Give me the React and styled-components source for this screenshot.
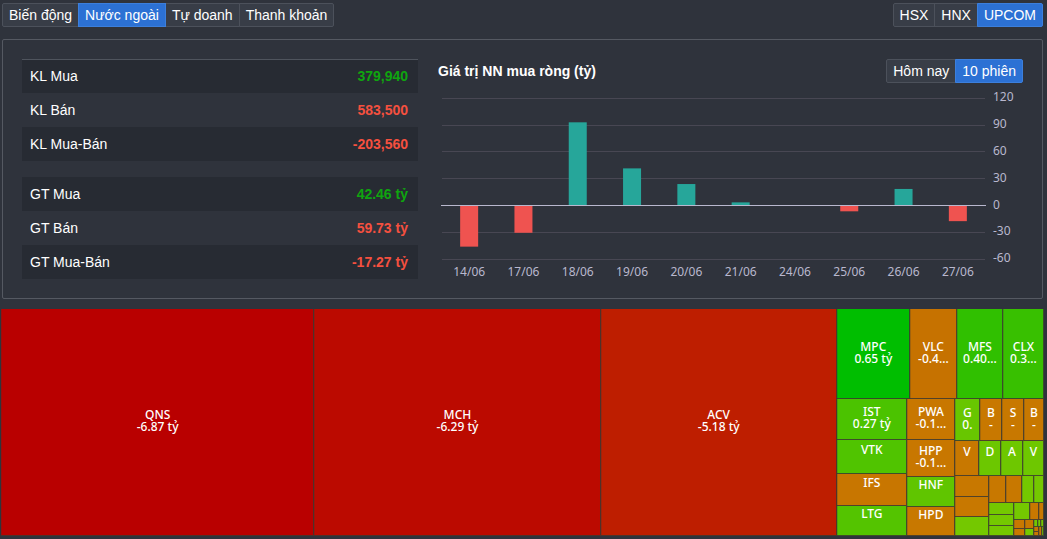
import React, { useState } from 'react';
import styled, { createGlobalStyle } from 'styled-components';

const VIEWS = ['Biến động', 'Nước ngoài', 'Tự doanh', 'Thanh khoản'];
const EXCHANGES = ['HSX', 'HNX', 'UPCOM'];
const RANGES = ['Hôm nay', '10 phiên'];

const VOLUME = [
  { label: 'KL Mua', value: '379,940', up: true },
  { label: 'KL Bán', value: '583,500' },
  { label: 'KL Mua-Bán', value: '-203,560' },
];

const VALUE = [
  { label: 'GT Mua', value: '42.46 tỷ', up: true },
  { label: 'GT Bán', value: '59.73 tỷ' },
  { label: 'GT Mua-Bán', value: '-17.27 tỷ' },
];

const SESSIONS = [
  { date: '14/06', net: -46 },
  { date: '17/06', net: -30.5 },
  { date: '18/06', net: 93 },
  { date: '19/06', net: 41.5 },
  { date: '20/06', net: 24 },
  { date: '21/06', net: 3.5 },
  { date: '24/06', net: 0.4 },
  { date: '25/06', net: -6.5 },
  { date: '26/06', net: 18.5 },
  { date: '27/06', net: -17.5 },
];

const TICKS = [120, 90, 60, 30, 0, -30, -60];

const ORANGE = '#c87800';
const LIME = '#74c800';

// every node is a tile, or a row / column of nodes; size is its share of the parent
const tile = (size, color, name, value) => ({ size, color, name, value });
const row = (size, ...items) => ({ size, dir: 'row', items });
const col = (size, ...items) => ({ size, dir: 'column', items });

const MARKET = row(
  1,
  tile(313, '#b90000', 'QNS', '-6.87 tỷ'),
  tile(286, '#bb0a00', 'MCH', '-6.29 tỷ'),
  tile(236, '#be1e00', 'ACV', '-5.18 tỷ'),
  col(
    207,
    row(
      90,
      tile(73, '#00be00', 'MPC', '0.65 tỷ'),
      tile(47, '#c67200', 'VLC', '-0.4...'),
      tile(46, '#30c000', 'MFS', '0.40...'),
      tile(41, '#38c000', 'CLX', '0.3...')
    ),
    row(
      137,
      col(
        70,
        tile(41, '#4bc300', 'IST', '0.27 tỷ'),
        tile(34, '#50c400', 'VTK'),
        tile(32, '#c87600', 'IFS'),
        tile(30, '#54c400', 'LTG')
      ),
      col(
        48,
        tile(41, '#c87700', 'PWA', '-0.1...'),
        tile(37, '#c87700', 'HPP', '-0.1...'),
        tile(30, '#60c500', 'HNF'),
        tile(29, ORANGE, 'HPD')
      ),
      col(
        89,
        row(
          42,
          tile(25, '#68c600', 'G', '0.'),
          tile(22, ORANGE, 'B', '-'),
          tile(22, ORANGE, 'S', '-'),
          tile(20, ORANGE, 'B', '-')
        ),
        row(35, tile(24, ORANGE, 'V'), tile(22, '#6cc700', 'D'), tile(22, '#6ec700', 'A'), tile(21, '#6ec700', 'V')),
        row(
          60,
          col(34, tile(21, ORANGE), tile(20, ORANGE), tile(19, LIME)),
          col(
            55,
            row(27, tile(17, ORANGE), tile(16, ORANGE), tile(12, LIME), tile(10, LIME)),
            row(
              33,
              col(25, tile(12, LIME), tile(11, LIME), tile(10, LIME)),
              col(
                30,
                row(17, tile(16, LIME), tile(9, ORANGE), tile(5, ORANGE)),
                row(
                  16,
                  col(11, tile(9, ORANGE), tile(7, ORANGE)),
                  col(9, tile(9, ORANGE), tile(7, LIME)),
                  col(
                    10,
                    row(7, tile(4, LIME), tile(3, LIME), tile(3, LIME)),
                    row(9, col(5, tile(4, ORANGE), tile(4, ORANGE)), tile(3, ORANGE), tile(2, LIME))
                  )
                )
              )
            )
          )
        )
      )
    )
  )
);

const ButtonGroup = ({ label, options, initial }) => {
  const [active, setActive] = useState(initial);

  return (
    <Group role="group" aria-label={label}>
      {options.map((option) => (
        <GroupButton
          key={option}
          type="button"
          $active={option === active}
          aria-pressed={option === active}
          onClick={() => setActive(option)}
        >
          {option}
        </GroupButton>
      ))}
    </Group>
  );
};

const StatTable = ({ rows, $topLine }) => (
  <Table $topLine={$topLine}>
    <tbody>
      {rows.map((item) => (
        <tr key={item.label}>
          <StatLabel scope="row">{item.label}</StatLabel>
          <StatValue $up={item.up}>{item.value}</StatValue>
        </tr>
      ))}
    </tbody>
  </Table>
);

const NetChart = () => {
  const left = 4;
  const right = 547;
  const zero = 119;
  const step = (right - left) / SESSIONS.length;
  const scale = 161 / 180;
  const gridY = (value) => Math.round(zero - value * scale) + 0.5;

  return (
    <Chart viewBox="0 0 585 193" role="img" aria-label="Giá trị NN mua ròng (tỷ)">
      {TICKS.map((tick) => (
        <g key={tick}>
          {tick !== 0 && <GridLine x1={left} x2={right} y1={gridY(tick)} y2={gridY(tick)} />}
          <AxisText x={right + 8} y={zero - tick * scale + 3.5}>{tick}</AxisText>
        </g>
      ))}
      {SESSIONS.map(({ date, net }, i) => {
        const center = left + step * (i + 0.5);
        const height = Math.abs(net) * scale;
        return (
          <g key={date}>
            <rect
              x={center - 9}
              y={net > 0 ? zero + 0.5 - height : zero + 0.5}
              width="18"
              height={height}
              fill={net > 0 ? '#26a69a' : '#ef5350'}
            />
            <AxisText x={center} y="190" textAnchor="middle">{date}</AxisText>
          </g>
        );
      })}
      <ZeroLine x1={left - 1} x2={right + 1} y1={zero + 0.5} y2={zero + 0.5} />
    </Chart>
  );
};

const MapNode = ({ node }) => {
  if (node.items) {
    return (
      <Branch $size={node.size} $dir={node.dir}>
        {node.items.map((item, i) => (
          <MapNode key={i} node={item} />
        ))}
      </Branch>
    );
  }
  return (
    <Tile $size={node.size} $color={node.color}>
      {node.name && (
        <TileText $single={!node.value}>
          {node.value ? `${node.name}\n${node.value}` : node.name}
        </TileText>
      )}
    </Tile>
  );
};

const App = () => {
  return (
    <>
      <GlobalStyle />
      <Toolbar>
        <ButtonGroup label="Chế độ xem" options={VIEWS} initial="Nước ngoài" />
        <ButtonGroup label="Sàn" options={EXCHANGES} initial="UPCOM" />
      </Toolbar>
      <Panel>
        <Stats>
          <StatTable rows={VOLUME} $topLine />
          <StatTable rows={VALUE} />
        </Stats>
        <ChartArea>
          <ChartHeader>
            <Title>Giá trị NN mua ròng (tỷ)</Title>
            <ButtonGroup label="Khoảng thời gian" options={RANGES} initial="10 phiên" />
          </ChartHeader>
          <NetChart />
        </ChartArea>
      </Panel>
      <Treemap>
        <MapNode node={MARKET} />
      </Treemap>
    </>
  );
};

const GlobalStyle = createGlobalStyle`
  * {
    box-sizing: border-box;
  }

  body {
    margin: 0;
    background: #2f333c;
    color: #fff;
    font-family: "Liberation Sans", Arial, sans-serif;
    font-size: 14px;
  }
`;

const Toolbar = styled.header`
  display: flex;
  justify-content: space-between;
  padding: 3px 4px 0 2px;
`;

const Group = styled.div`
  display: flex;
`;

const GroupButton = styled.button`
  position: relative;
  z-index: ${(props) => (props.$active ? 1 : 0)};
  height: 24px;
  padding: 0 6px;
  border: 1px solid ${(props) => (props.$active ? '#3c7fdc' : '#4c515b')};
  background: ${(props) => (props.$active ? '#2c71d4' : '#383d47')};
  color: #fff;
  font-family: inherit;
  font-size: 14px;
  line-height: 22px;
  cursor: pointer;

  & + & {
    margin-left: -1px;
  }

  &:first-child {
    border-radius: 2px 0 0 2px;
  }

  &:last-child {
    border-radius: 0 2px 2px 0;
  }
`;

const Panel = styled.section`
  display: grid;
  grid-template-columns: 44fr 65fr;
  gap: 20px;
  margin: 12px 4px 0 2px;
  padding: 19px;
  border: 1px solid #555962;
  border-radius: 2px;
`;

const Stats = styled.div`
  display: flex;
  flex-direction: column;
  gap: 16px;
`;

const Table = styled.table`
  width: 100%;
  border-spacing: 0;

  tr:nth-child(odd) {
    background: #272b33;
  }

  tr:first-child > * {
    box-shadow: ${(props) => (props.$topLine ? 'inset 0 1px 0 #4f545d' : 'none')};
  }
`;

const StatLabel = styled.th`
  height: 34px;
  padding: 0 8px;
  font-weight: normal;
  text-align: left;
`;

const StatValue = styled.td`
  height: 34px;
  padding: 0 10px;
  color: ${(props) => (props.$up ? '#0fa50f' : '#f5503f')};
  font-weight: bold;
  text-align: right;
`;

const ChartArea = styled.div`
  min-width: 0;
`;

const ChartHeader = styled.div`
  display: flex;
  align-items: center;
  justify-content: space-between;
`;

const Title = styled.h2`
  margin: 0;
  font-size: 14px;
  font-weight: bold;
`;

const Chart = styled.svg`
  display: block;
  width: 100%;
  margin-top: 3px;
`;

const GridLine = styled.line`
  stroke: #484753;
`;

const ZeroLine = styled.line`
  stroke: #b9b8ce;
`;

const AxisText = styled.text`
  fill: #b9b8ce;
  font-family: "Noto Sans", "Open Sans", sans-serif;
  font-size: 12px;
`;

const Treemap = styled.section`
  display: flex;
  height: 227px;
  margin: 10px 3px 3px 1px;
  font-family: "Noto Sans", "Open Sans", sans-serif;
`;

const Branch = styled.div`
  display: flex;
  flex: ${(props) => props.$size} 1 0;
  flex-direction: ${(props) => props.$dir};
  min-width: 0;
  min-height: 0;
`;

const Tile = styled.div`
  display: flex;
  flex: ${(props) => props.$size} 1 0;
  align-items: center;
  justify-content: center;
  min-width: 0;
  min-height: 0;
  background: ${(props) => props.$color};
  box-shadow: inset -1px -1px 0 rgba(60, 56, 48, 0.85), inset 1px 0 0 rgba(60, 56, 48, 0.25);
  overflow: hidden;
`;

const TileText = styled.div`
  padding-bottom: ${(props) => (props.$single ? '14px' : '3px')};
  font-size: 12px;
  font-weight: 500;
  line-height: 12px;
  text-align: center;
  white-space: pre;
`;

export default App;
